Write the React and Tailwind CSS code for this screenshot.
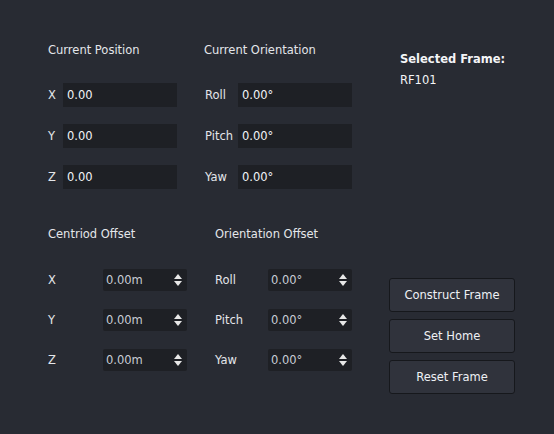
import { useState } from 'react'

const font = { fontFamily: '"DejaVu Sans", Verdana, sans-serif' }

function Spinner() {
  return (
    <div className="flex flex-col items-center gap-[2px]">
      <svg width="8" height="5" viewBox="0 0 8 5"><path d="M4 0L8 5H0z" fill="#e8e8e8" /></svg>
      <svg width="8" height="5" viewBox="0 0 8 5"><path d="M0 0h8L4 5z" fill="#e8e8e8" /></svg>
    </div>
  )
}

function ReadRow({ label, value, labelW }) {
  return (
    <div className="flex items-center h-[24px]">
      <span className={`${labelW} text-[11.5px] text-[#e4e6ea]`}>{label}</span>
      <div className="w-[114px] h-[24px] bg-[#1e2025] flex items-center pl-[4px] text-[11.5px] text-[#f2f4f8]">
        {value}
      </div>
    </div>
  )
}

function SpinRow({ label, value, labelW }) {
  const [v] = useState(value)
  return (
    <div className="flex items-center h-[22px]">
      <span className={`${labelW} text-[11.5px] text-[#e4e6ea]`}>{label}</span>
      <div className="w-[84px] h-[22px] bg-[#1e2025] rounded-[2px] flex items-center justify-between pl-[3px] pr-[5px] text-[11.5px] text-[#c9cdd6]">
        <span>{v}</span>
        <Spinner />
      </div>
    </div>
  )
}

export default function App() {
  return (
    <div className="w-[554px] h-[434px] bg-[#282b33] flex leading-[14px]" style={font}>
      {/* left side */}
      <div className="w-[389px] pl-[48px] pt-[43px] flex flex-col">
        <div className="flex">
          <div className="w-[156px]">
            <div className="text-[11.5px] text-[#e4e6ea] h-[14px]">Current Position</div>
            <div className="mt-[26px] flex flex-col gap-[17px]">
              <ReadRow label="X" value="0.00" labelW="w-[15px]" />
              <ReadRow label="Y" value="0.00" labelW="w-[15px]" />
              <ReadRow label="Z" value="0.00" labelW="w-[15px]" />
            </div>
          </div>
          <div>
            <div className="text-[11.5px] text-[#e4e6ea] h-[14px]">Current Orientation</div>
            <div className="mt-[26px] flex flex-col gap-[17px] pl-[1px]">
              <ReadRow label="Roll" value="0.00°" labelW="w-[33px]" />
              <ReadRow label="Pitch" value="0.00°" labelW="w-[33px]" />
              <ReadRow label="Yaw" value="0.00°" labelW="w-[33px]" />
            </div>
          </div>
        </div>

        <div className="flex mt-[38px]">
          <div className="w-[167px]">
            <div className="text-[11.5px] text-[#e4e6ea] h-[14px]">Centriod Offset</div>
            <div className="mt-[28px] flex flex-col gap-[18px]">
              <SpinRow label="X" value="0.00m" labelW="w-[55px]" />
              <SpinRow label="Y" value="0.00m" labelW="w-[55px]" />
              <SpinRow label="Z" value="0.00m" labelW="w-[55px]" />
            </div>
          </div>
          <div>
            <div className="text-[11.5px] text-[#e4e6ea] h-[14px]">Orientation Offset</div>
            <div className="mt-[28px] flex flex-col gap-[18px]">
              <SpinRow label="Roll" value="0.00°" labelW="w-[53px]" />
              <SpinRow label="Pitch" value="0.00°" labelW="w-[53px]" />
              <SpinRow label="Yaw" value="0.00°" labelW="w-[53px]" />
            </div>
          </div>
        </div>
      </div>

      {/* right side */}
      <div className="flex flex-col">
        <div className="pl-[11px] pt-[52px]">
          <div className="text-[11.5px] font-bold text-[#f4f5f7]">Selected Frame:</div>
          <div className="mt-[7px] text-[11.5px] text-[#f4f5f7]">RF101</div>
        </div>
        <div className="mt-[191px] flex flex-col gap-[7px]">
          {['Construct Frame', 'Set Home', 'Reset Frame'].map(t => (
            <button
              key={t}
              type="button"
              className="w-[126px] h-[34px] rounded-[3px] border border-[#16181c] bg-[#30333c] text-[11.5px] text-[#eef0f4]"
            >
              {t}
            </button>
          ))}
        </div>
      </div>
    </div>
  )
}
